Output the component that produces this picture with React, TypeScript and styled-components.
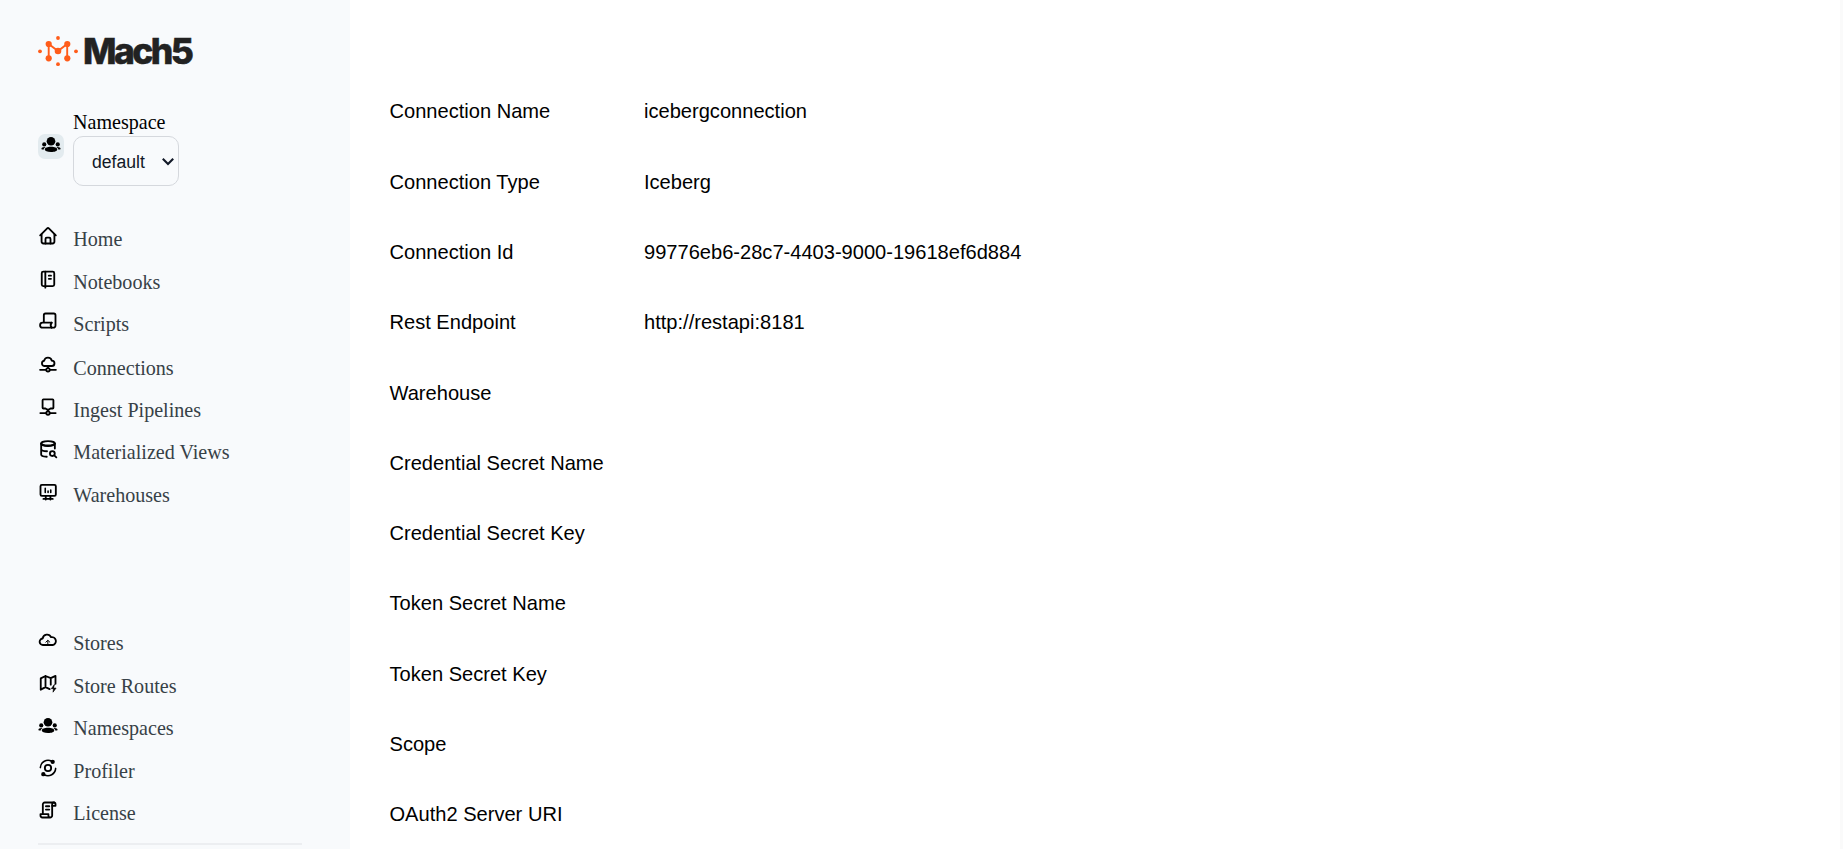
import { FC, ReactNode } from 'react';
import styled, { createGlobalStyle } from 'styled-components';

const colors = {
  sidebar: '#f8fafc',
  badge: '#e3ebef',
  border: '#d5d8dd',
  divider: '#eceef1',
  navText: '#374147',
  orange: '#ff5c1a',
  logo: '#222222',
};

const icons: Record<string, ReactNode> = {
  home: (
    <>
      <path d='M2.6 11.2 11 2.8a1.4 1.4 0 0 1 2 0l8.4 8.4' />
      <path d='M4.3 10V18.700a2.300 2.300 0 0 0 2.300 2.300h10.800a2.300 2.300 0 0 0 2.300-2.300V10' />
      <path d='M9 21v-5.5a1.5 1.5 0 0 1 1.5-1.5h3a1.5 1.5 0 0 1 1.5 1.5V21' />
    </>
  ),
  notebook: (
    <>
      <rect x='4.5' y='3.2' width='15' height='17.3' rx='1.8' />
      <path d='M8.8 3.2v19.2M13 8h2.6M13 11.8h2.6' />
    </>
  ),
  script: (
    <>
      <path d='M7 13.5V5a2 2 0 0 1 2-2h10a2 2 0 0 1 2 2v12.5a2.5 2.5 0 0 1-2.5 2.5H5.5a3 3 0 0 1-3-3a3 3 0 0 1 3-3h11' />
      <path d='M16.3 14c-1.5 2-1.5 4 0 6' />
    </>
  ),
  connection: (
    <>
      <path d='M7.5 13.2a3.2 3.2 0 0 1-.2-6.3 4.8 4.8 0 0 1 9.3-.1 3.2 3.2 0 0 1-.1 6.4z' />
      <path d='M12 13.5v2.2M2.5 17.8h7M14.5 17.8h7' />
      <circle cx='12' cy='17.8' r='2.1' />
    </>
  ),
  pipeline: (
    <>
      <path d='M6.5 2.8h11a1 1 0 0 1 1 1v9a1 1 0 0 1-1 1h-2.5l-3 2-3-2H6.5a1 1 0 0 1-1-1v-9a1 1 0 0 1 1-1z' />
      <path d='M12 15v2M2.8 19.3h6.7M14.5 19.3h6.7' />
      <circle cx='12' cy='19.3' r='2.1' />
    </>
  ),
  views: (
    <>
      <ellipse cx='12' cy='5.2' rx='8.2' ry='2.6' />
      <path d='M3.8 5.5v13c0 1.5 2.5 2.5 6.7 2.8M20.2 5.5v6M3.8 12c0 1.5 3 2.6 7 2.7' />
      <path d='M3.8 5.5c0 4 16.4 4 16.4 0' />
      <circle cx='17.2' cy='17.5' r='2.9' />
      <path d='m19.5 19.7 2.5 2.3' />
    </>
  ),
  warehouse: (
    <>
      <rect x='3' y='3.4' width='18.4' height='13.2' rx='1.6' />
      <path d='M9.3 17v4M14.9 17v4M6.5 20.3h11.2' />
      <path d='M8.7 7.5v5M12.1 10.8v1.7M15.3 9.5v3' strokeWidth='1.9' />
    </>
  ),
  store: (
    <>
      <path d='M6 18a3.9 3.9 0 0 1-.3-7.8 5.2 5.2 0 0 1 9.9-1.6 4.7 4.7 0 0 1 2.1 9.4z' />
      <path d='M11.8 17.2v-4.5M9.4 14.6l2.4-2.3 2.4 2.3' strokeWidth='1.2' />
    </>
  ),
  routes: (
    <>
      <path d='M14 19.3 9 17l-5.7 3V6.5L9 3.6l6.3 2.6 5.7-2.7V13M9 3.6V17M15.3 6.2V14' />
      <path d='M19.5 14 16 18.8h2.7L18 23l3.7-4.9H19z' fill='currentColor' strokeWidth='.8' />
    </>
  ),
  people: (
    <g fill='currentColor' stroke='none'>
      <circle cx='12' cy='8.7' r='5.2' />
      <circle cx='3.9' cy='12.5' r='2.5' />
      <circle cx='20.1' cy='12.5' r='2.5' />
      <path d='M4.5 18.6c0-2.2 3-3.4 7.5-3.4s7.5 1.2 7.5 3.4c0 1.9-3 3-7.5 3s-7.5-1.1-7.5-3' />
      <path d='M.5 17.7c0-1.5 2-2.4 5.2-2-1.3.7-2.2 1.7-2.4 3C1.5 18.7.5 18.4.5 17.7M23.5 17.7c0-1.5-2-2.4-5.2-2 1.3.7 2.2 1.7 2.4 3 1.8 0 2.8-.3 2.8-1' />
    </g>
  ),
  profiler: (
    <>
      <circle cx='12' cy='12' r='3.8' />
      <path d='M2.8 11.5A9.3 9.3 0 0 1 16.5 3.9M21.2 12.5A9.3 9.3 0 0 1 7.5 20.1' strokeWidth='1.9' />
      <circle cx='17.6' cy='4.6' r='1.5' fill='currentColor' />
      <circle cx='6.4' cy='19.4' r='1.5' fill='currentColor' />
    </>
  ),
  license: (
    <>
      <path d='M5.8 17V5.2A2.2 2.2 0 0 1 8 3h11.5M17 7v11.5a2.5 2.5 0 0 1-2.5 2.5H5.3a2.3 2.3 0 0 1-2.3-2.3V17h9.5v1.5a2.3 2.3 0 0 0 2.3 2.5' />
      <path d='M17 7h4V5a2 2 0 0 0-4 0zM9.5 7.5h4M9.5 11.5h4' />
    </>
  ),
};

const Icon: FC<{ name: string }> = ( { name } ) => (
  <IconSvg viewBox='0 0 24 24' width='20' height='20'>
    { icons[ name ] }
  </IconSvg>
);

type NavLink = {
  icon: string;
  label: string;
  height?: number;
};

const mainLinks: NavLink[] = [
  { icon: 'home', label: 'Home' },
  { icon: 'notebook', label: 'Notebooks' },
  { icon: 'script', label: 'Scripts', height: 43.5 },
  { icon: 'connection', label: 'Connections', height: 42.2 },
  { icon: 'pipeline', label: 'Ingest Pipelines' },
  { icon: 'views', label: 'Materialized Views', height: 42.1 },
  { icon: 'warehouse', label: 'Warehouses' },
];

const adminLinks: NavLink[] = [
  { icon: 'store', label: 'Stores' },
  { icon: 'routes', label: 'Store Routes' },
  { icon: 'people', label: 'Namespaces' },
  { icon: 'profiler', label: 'Profiler' },
  { icon: 'license', label: 'License' },
];

const details = [
  [ 'Connection Name', 'icebergconnection' ],
  [ 'Connection Type', 'Iceberg' ],
  [ 'Connection Id', '99776eb6-28c7-4403-9000-19618ef6d884' ],
  [ 'Rest Endpoint', 'http://restapi:8181' ],
  [ 'Warehouse', '' ],
  [ 'Credential Secret Name', '' ],
  [ 'Credential Secret Key', '' ],
  [ 'Token Secret Name', '' ],
  [ 'Token Secret Key', '' ],
  [ 'Scope', '' ],
  [ 'OAuth2 Server URI', '' ],
];

const Logo: FC = () => (
  <LogoRow>
    <svg width='40' height='32' viewBox='0 0 40 32' fill={ colors.orange } stroke='none'>
      <path
        d='M10.7 9 20 16l9.2-7v14.3M10.7 9v14.3'
        fill='none'
        stroke={ colors.orange }
        strokeWidth='1.9'
      />
      <circle cx='10.7' cy='9' r='3.1' />
      <circle cx='29.3' cy='9' r='3.1' />
      <circle cx='10.7' cy='23.3' r='3.1' />
      <circle cx='29.3' cy='23.3' r='3.1' />
      <circle cx='20' cy='16' r='3.3' />
      <circle cx='20' cy='3' r='1.9' />
      <circle cx='20' cy='29.2' r='1.9' />
      <circle cx='2' cy='16.3' r='1.9' />
      <circle cx='38' cy='16.3' r='1.9' />
    </svg>
    <LogoText>Mach5</LogoText>
  </LogoRow>
);

const NavLinks: FC<{ links: NavLink[] }> = ( { links } ) => (
  <NavList>
    { links.map( ( { icon, label, height } ) => (
      <NavItem key={ label } $height={ height }>
        <Icon name={ icon } />
        <NavLabel>{ label }</NavLabel>
      </NavItem>
    ) ) }
  </NavList>
);

const App: FC = () => (
  <>
    <GlobalStyle />
    <Page>
      <Sidebar>
        <Logo />
        <NamespaceRow>
          <Badge>
            <Icon name='people' />
          </Badge>
          <NamespaceField>
            Namespace
            <SelectBox>
              <NamespaceSelect defaultValue='default'>
                <option>default</option>
              </NamespaceSelect>
              <Chevron viewBox='0 0 14 9' width='14' height='9'>
                <path d='m1.8 1.8 5.2 5.2 5.2-5.2' />
              </Chevron>
            </SelectBox>
          </NamespaceField>
        </NamespaceRow>
        <NavLinks links={ mainLinks } />
        <Spacer />
        <NavLinks links={ adminLinks } />
        <Divider />
      </Sidebar>
      <Main>
        <Details>
          { details.map( ( [ label, value ] ) => (
            <DetailRow key={ label }>
              <dt>{ label }</dt>
              <DetailValue>{ value }</DetailValue>
            </DetailRow>
          ) ) }
        </Details>
      </Main>
      <ScrollTrack />
    </Page>
  </>
);

export default App;

const GlobalStyle = createGlobalStyle`
  * {
    box-sizing: border-box;
  }
  body {
    margin: 0;
    background-color: #ffffff;
    overflow: hidden;
  }
`;
const Page = styled.div`
  display: flex;
  height: 849px;
  overflow: hidden;
`;
const Sidebar = styled.aside`
  display: flex;
  flex-direction: column;
  flex-shrink: 0;
  width: 350px;
  padding: 35px 48px 0 38px;
  font-family: 'Liberation Serif', serif;
  font-size: 20.08px;
  color: #000000;
  background-color: ${ colors.sidebar };
`;
const LogoRow = styled.div`
  display: flex;
  align-items: center;
  height: 32px;
`;
const LogoText = styled.span`
  margin-left: 5px;
  padding-top: 2px;
  font-family: Inter, sans-serif;
  font-size: 35.5px;
  font-weight: 800;
  line-height: 32px;
  letter-spacing: -2.6px;
  color: ${ colors.logo };
  -webkit-text-stroke: 0.5px ${ colors.logo };
`;
const NamespaceRow = styled.div`
  display: flex;
  align-items: center;
  height: 75px;
  margin-top: 44px;
`;
const Badge = styled.div`
  display: flex;
  justify-content: center;
  width: 25.5px;
  height: 25.5px;
  margin: 0 9.2px 4.5px 0.3px;
  background-color: ${ colors.badge };
  border-radius: 7px;
`;
const NamespaceField = styled.label`
  display: flex;
  flex-direction: column;
  line-height: 23px;
`;
const SelectBox = styled.span`
  position: relative;
  display: flex;
  margin-top: 2px;
`;
const NamespaceSelect = styled.select`
  width: 106px;
  height: 50px;
  padding: 2px 0 0 18px;
  font-family: 'Liberation Sans', sans-serif;
  font-size: 17.6px;
  color: #111827;
  background-color: ${ colors.sidebar };
  border: 1px solid ${ colors.border };
  border-radius: 10px;
  appearance: none;
`;
const Chevron = styled.svg`
  position: absolute;
  top: 21px;
  right: 4px;
  fill: none;
  stroke: #111827;
  stroke-width: 2.1;
`;
const NavList = styled.ul`
  margin: 30px 0 0;
  padding: 0;
  list-style: none;
`;
const NavItem = styled.li<{ $height?: number }>`
  display: flex;
  align-items: baseline;
  height: ${ ( { $height = 42.6 } ) => $height }px;
  padding-top: 10px;
  line-height: 23px;
`;
const IconSvg = styled.svg`
  flex-shrink: 0;
  color: #000000;
  fill: none;
  stroke: currentColor;
  stroke-width: 2.2;
  stroke-linecap: round;
  stroke-linejoin: round;
`;
const NavLabel = styled.a`
  margin-left: 15.3px;
  color: ${ colors.navText };
`;
const Spacer = styled.div`
  height: 75.85px;
`;
const Divider = styled.hr`
  flex-shrink: 0;
  width: 263.5px;
  height: 2px;
  margin: 9.6px 0 0;
  background-color: ${ colors.divider };
  border: none;
`;
const Main = styled.main`
  flex: 1;
  padding: 76.75px 0 0 39.5px;
`;
const Details = styled.dl`
  margin: 0;
  font-family: 'Liberation Sans', sans-serif;
  font-size: 20.08px;
  line-height: 23px;
  color: #000000;
`;
const DetailRow = styled.div`
  display: grid;
  grid-template-columns: 254.5px 1fr;
  align-items: center;
  height: 70.3px;
`;
const DetailValue = styled.dd`
  margin: 0;
`;
const ScrollTrack = styled.div`
  width: 3px;
  background-color: #fafafa;
`;
